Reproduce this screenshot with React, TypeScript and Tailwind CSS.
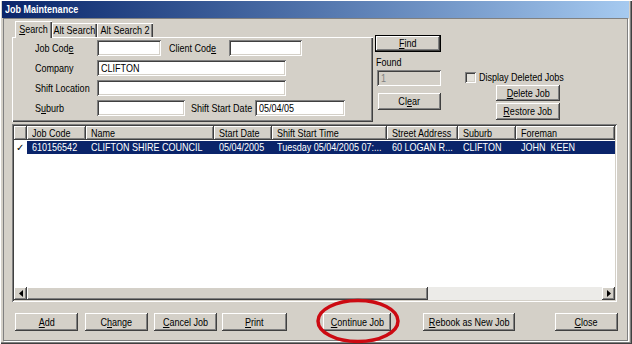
import React from "react";

const raised =
  "bg-[#d4d0c8] shadow-[inset_-1px_-1px_#404040,inset_1px_1px_#ffffff,inset_-2px_-2px_#808080,inset_2px_2px_#d4d0c8]";
const sunken =
  "shadow-[inset_1px_1px_#808080,inset_-1px_-1px_#ffffff,inset_2px_2px_#404040,inset_-2px_-2px_#d4d0c8]";
const headerCell =
  "shadow-[inset_-1px_-1px_#404040,inset_1px_1px_#ffffff,inset_-2px_-2px_#808080]";
const tabShadow = "shadow-[inset_1px_1px_#ffffff,inset_-1px_0_#404040,inset_-2px_0_#808080]";

// narrow text: the old MS Sans Serif is much narrower than Arial
function T({ children, center }: { children: React.ReactNode; center?: boolean }) {
  return (
    <span
      className={`inline-block whitespace-pre scale-x-[0.82] ${center ? "origin-center" : "origin-left"}`}
    >
      {children}
    </span>
  );
}

function Btn({ className, children }: { className: string; children: React.ReactNode }) {
  return (
    <div className={`${className} ${raised} flex items-center justify-center text-black`}>
      <T center>{children}</T>
    </div>
  );
}

function Field({ className, value, disabled }: { className: string; value?: string; disabled?: boolean }) {
  return (
    <div
      className={`${className} ${sunken} h-[16px] flex items-center pl-[4px] ${
        disabled ? "bg-[#d4d0c8] text-[#808080]" : "bg-white text-black"
      }`}
    >
      {value && <T>{value}</T>}
    </div>
  );
}

const columns = [
  { name: "", w: "w-[13px]" },
  { name: "Job Code", w: "w-[59px]" },
  { name: "Name", w: "w-[128px]" },
  { name: "Start Date", w: "w-[58px]" },
  { name: "Shift Start Time", w: "w-[115px]" },
  { name: "Street Address", w: "w-[71px]" },
  { name: "Suburb", w: "w-[58px]" },
  { name: "Foreman", w: "flex-1" },
];

const row = [
  "610156542",
  "CLIFTON SHIRE COUNCIL",
  "05/04/2005",
  "Tuesday 05/04/2005 07:...",
  "60 LOGAN R...",
  "CLIFTON",
  "JOHN  KEEN",
];

export default function App() {
  return (
    <div className="relative w-[632px] h-[344px] overflow-hidden bg-[#d4d0c8] font-['Liberation_Sans',Arial,sans-serif] text-[11px] leading-[13px] text-black">
      <div className="flex h-full flex-col shadow-[inset_1px_1px_#ffffff,inset_-1px_-1px_#404040,inset_-2px_-2px_#808080] pl-[2px] pr-[3px] pt-[1px] pb-[3px]">
        {/* title bar */}
        <div className="flex h-[17px] items-center bg-linear-to-r from-[#0a246a] to-[#a6caf0] pl-[3px] text-[11px] font-bold text-white">
          <T>Job Maintenance</T>
        </div>

        <div className="ml-[1px] mr-[1px] flex-1 border border-[#808080] shadow-[1px_1px_#ffffff] pl-[8px] pt-[2px]">
          {/* top section */}
          <div className="flex h-[101px]">
            <div className="flex flex-col">
              <div className="flex h-[16px] items-end pl-[3px]">
                <div className="relative z-10 -mb-[1px] flex h-[17px] w-[37px] items-center justify-center bg-[#d4d0c8] shadow-[inset_1px_1px_#ffffff,inset_-1px_0_#404040,inset_-2px_0_#808080]">
                  <T center>
                    <u>S</u>earch
                  </T>
                </div>
                <div className={`flex h-[14px] w-[45px] items-center justify-center ${tabShadow}`}>
                  <T center>Alt Search</T>
                </div>
                <div className={`flex h-[14px] w-[56px] items-center justify-center ${tabShadow}`}>
                  <T center>Alt Search 2</T>
                </div>
              </div>
              <div className="flex h-[85px] w-[361px] flex-col gap-[4px] pl-[23px] pt-[3px] shadow-[inset_1px_1px_#ffffff,inset_-1px_-1px_#404040,inset_-2px_-2px_#808080]">
                <div className="flex h-[16px] items-center">
                  <div className="w-[62px]">
                    <T>
                      Job Cod<u>e</u>
                    </T>
                  </div>
                  <Field className="w-[64px]" />
                  <div className="ml-[8px] w-[60px]">
                    <T>
                      Client Cod<u>e</u>
                    </T>
                  </div>
                  <Field className="w-[73px]" />
                </div>
                <div className="flex h-[16px] items-center">
                  <div className="w-[62px]">
                    <T>Company</T>
                  </div>
                  <Field className="w-[189px]" value="CLIFTON" />
                </div>
                <div className="flex h-[16px] items-center">
                  <div className="w-[62px]">
                    <T>Shift Location</T>
                  </div>
                  <Field className="w-[189px]" />
                </div>
                <div className="flex h-[16px] items-center">
                  <div className="w-[62px]">
                    <T>
                      S<u>u</u>burb
                    </T>
                  </div>
                  <Field className="w-[88px]" />
                  <div className="ml-[6px] w-[64px]">
                    <T>Shift Start Date</T>
                  </div>
                  <Field className="w-[90px]" value="05/04/05" />
                </div>
              </div>
            </div>

            <div className="ml-[2px] flex w-[67px] flex-col pt-[14px]">
              <div className="flex h-[17px] w-[66px] items-center justify-center border border-black bg-[#d4d0c8] shadow-[inset_-1px_-1px_#404040,inset_1px_1px_#ffffff,inset_-2px_-2px_#808080]">
                <T center>
                  <u>F</u>ind
                </T>
              </div>
              <div className="mt-[4px] ml-[1px] h-[13px]">
                <T>Found</T>
              </div>
              <Field className="mt-[1px] ml-[2px] w-[64px]" value="1" disabled />
              <Btn className="mt-[7px] ml-[3px] h-[17px] w-[63px]">
                Cl<u>e</u>ar
              </Btn>
            </div>

            <div className="ml-[23px] flex flex-col pt-[51px]">
              <div className="flex h-[11px] items-center">
                <div className={`h-[11px] w-[11px] shrink-0 bg-[#e4e2dc] ${sunken}`} />
                <span className="ml-[3px]">
                  <T>Display Deleted Jobs</T>
                </span>
              </div>
              <Btn className="ml-[31px] mt-[2px] h-[16px] w-[64px]">
                <u>D</u>elete Job
              </Btn>
              <Btn className="ml-[31px] mt-[2px] h-[17px] w-[64px]">
                <u>R</u>estore Job
              </Btn>
            </div>
          </div>

          {/* list */}
          <div className={`mt-[2px] flex h-[178px] w-[605px] flex-col bg-white p-[2px] ${sunken}`}>
            <div className="flex h-[14px]">
              {columns.map((c, i) => (
                <div
                  key={i}
                  className={`${c.w} ${headerCell} bg-[#d4d0c8] flex items-center overflow-hidden pl-[5px]`}
                >
                  <T>{c.name}</T>
                </div>
              ))}
            </div>
            <div className="mt-[1px] flex h-[13px]">
              <div className="flex w-[13px] items-center pl-[2px] text-[10px]">✓</div>
              <div className="flex flex-1 bg-[#0a246a] text-white">
                {row.map((v, i) => (
                  <div
                    key={i}
                    className={`${columns[i + 1].w} flex items-center overflow-hidden pl-[5px]`}
                  >
                    <T>{v}</T>
                  </div>
                ))}
              </div>
            </div>
            <div className="flex-1" />
            <div className="flex h-[13px] bg-[#ecebe8]">
              <div className={`flex w-[13px] items-center justify-center ${raised}`}>
                <svg width="4" height="7" viewBox="0 0 4 7">
                  <path d="M4 0 L0 3.5 L4 7 Z" fill="#000" />
                </svg>
              </div>
              <div className={`w-[401px] ${raised}`} />
              <div className="flex-1" />
              <div className={`flex w-[13px] items-center justify-center ${raised}`}>
                <svg width="4" height="7" viewBox="0 0 4 7">
                  <path d="M0 0 L4 3.5 L0 7 Z" fill="#000" />
                </svg>
              </div>
            </div>
          </div>

          {/* bottom buttons */}
          <div className="mt-[11px] flex h-[18px]">
            <Btn className="ml-[3px] w-[63px]">
              <u>A</u>dd
            </Btn>
            <Btn className="ml-[7px] w-[63px]">
              C<u>h</u>ange
            </Btn>
            <Btn className="ml-[6px] w-[63px]">
              <u>C</u>ancel Job
            </Btn>
            <Btn className="ml-[5px] w-[65px]">
              <u>P</u>rint
            </Btn>
            <Btn className="ml-[36px] w-[68px]">
              <u>C</u>ontinue Job
            </Btn>
            <Btn className="ml-[32px] w-[92px]">
              <u>R</u>ebook as New Job
            </Btn>
            <Btn className="ml-[40px] w-[63px]">
              <u>C</u>lose
            </Btn>
          </div>
        </div>
      </div>

      {/* red highlight around Continue Job */}
      <svg className="absolute left-[315px] top-[298px]" width="86" height="46" viewBox="0 0 86 46">
        <ellipse cx="43" cy="23" rx="40" ry="20.5" fill="none" stroke="#cc0a12" strokeWidth="3.5" />
      </svg>
    </div>
  );
}
